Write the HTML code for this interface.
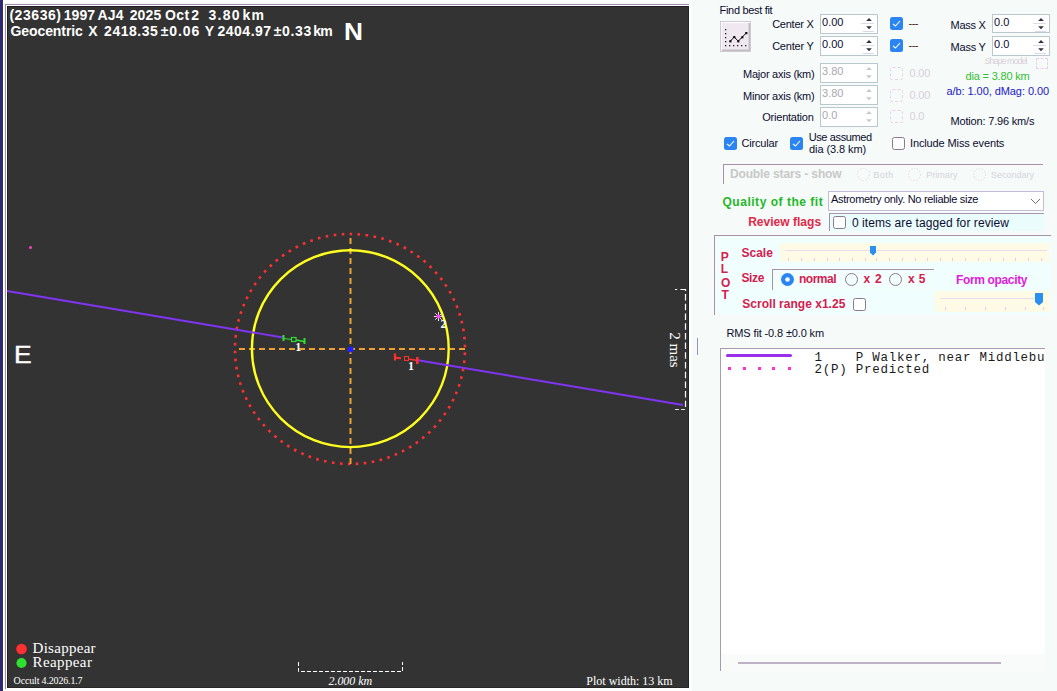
<!DOCTYPE html>
<html><head><meta charset="utf-8"><style>
html,body{margin:0;padding:0;width:1057px;height:691px;overflow:hidden;background:#f6faf8;}
.r{position:absolute;box-sizing:border-box;}
.t{position:absolute;white-space:pre;}
</style></head><body>
<div class="r" style="left:0px;top:0px;width:2px;height:691px;background:#2b2878"></div>
<div class="r" style="left:2px;top:0px;width:1px;height:691px;background:#3a3044"></div>
<div class="r" style="left:3px;top:0px;width:689px;height:691px;background:#fdfefd"></div>
<div class="r" style="left:4px;top:3px;width:686px;height:1px;background:#eef8ee"></div>
<div class="r" style="left:4px;top:3px;width:1px;height:686px;background:#e6fae6"></div>
<div class="r" style="left:5px;top:4px;width:684px;height:1px;background:#a888b4"></div>
<div class="r" style="left:5px;top:4px;width:1px;height:685px;background:#a888b4"></div>
<div class="r" style="left:7px;top:6px;width:682px;height:682px;background:#333333"></div>
<div class="r" style="left:7px;top:6px;width:682px;height:1px;background:#1e1e1e"></div>
<div class="r" style="left:7px;top:6px;width:1px;height:682px;background:#1e1e1e"></div>
<div class="r" style="left:688px;top:6px;width:1px;height:682px;background:#262626"></div>
<div class="r" style="left:7px;top:687px;width:682px;height:1px;background:#262626"></div>
<svg class="r" style="left:0;top:0" width="1057" height="691" viewBox="0 0 1057 691"><circle cx="350" cy="349" r="115" fill="none" stroke="#ff3030" stroke-width="2.6" stroke-dasharray="2.6 5.4" pathLength="720" stroke-dashoffset="4.4"/><line x1="235" y1="349.1" x2="465" y2="349.1" stroke="#f0a030" stroke-width="2" stroke-dasharray="6 4" stroke-dashoffset="6"/><line x1="350.5" y1="235" x2="350.5" y2="465" stroke="#f0a030" stroke-width="2" stroke-dasharray="6 4" stroke-dashoffset="7"/><circle cx="350.3" cy="348.7" r="98.4" fill="none" stroke="#ffff20" stroke-width="2.4"/><line x1="7" y1="291" x2="283" y2="337.5" stroke="#8034f4" stroke-width="1.9"/><line x1="418" y1="360.3" x2="683" y2="405" stroke="#8034f4" stroke-width="1.9"/><circle cx="350.5" cy="349.5" r="3" fill="#2020ff"/></svg>
<svg class="r" style="left:0;top:0" width="1057" height="691" viewBox="0 0 1057 691"><path d="M283.5 335 V341" stroke="#30e030" stroke-width="2"/><path d="M284 338.5 L292 339.5" stroke="#30e030" stroke-width="1"/><rect x="291.5" y="337.5" width="4.5" height="4" fill="none" stroke="#30e030" stroke-width="1.2"/><path d="M296 340 L304 341.5" stroke="#30e030" stroke-width="1.6"/><path d="M304.5 338 V344" stroke="#30e030" stroke-width="2"/><path d="M395 353.5 V360.5" stroke="#ff3030" stroke-width="2.2"/><path d="M396 357.7 L401 358.2" stroke="#ff3030" stroke-width="2"/><rect x="404.5" y="356.5" width="4" height="4" fill="none" stroke="#ff3030" stroke-width="1"/><path d="M408.5 359 L416 360.3" stroke="#ff3030" stroke-width="1.6"/><path d="M417.3 357 V364" stroke="#ff3030" stroke-width="2.6"/><line x1="438.5" y1="316.5" x2="443.10" y2="316.50" stroke="#f0e0f0" stroke-width="1"/><line x1="438.5" y1="316.5" x2="441.75" y2="319.75" stroke="#f0e0f0" stroke-width="1"/><line x1="438.5" y1="316.5" x2="438.50" y2="321.10" stroke="#f0e0f0" stroke-width="1"/><line x1="438.5" y1="316.5" x2="435.25" y2="319.75" stroke="#f0e0f0" stroke-width="1"/><line x1="438.5" y1="316.5" x2="433.90" y2="316.50" stroke="#f0e0f0" stroke-width="1"/><line x1="438.5" y1="316.5" x2="435.25" y2="313.25" stroke="#f0e0f0" stroke-width="1"/><line x1="438.5" y1="316.5" x2="438.50" y2="311.90" stroke="#f0e0f0" stroke-width="1"/><line x1="438.5" y1="316.5" x2="441.75" y2="313.25" stroke="#f0e0f0" stroke-width="1"/><circle cx="438.5" cy="316.5" r="2" fill="#ff40ff"/><circle cx="30.5" cy="247.5" r="1.5" fill="#ff40c0"/><path d="M675 289.5 H685.5 V407" fill="none" stroke="#fff" stroke-width="1.2" stroke-dasharray="6.5 3.2" stroke-dashoffset="4.3"/><path d="M675 409.5 H686" fill="none" stroke="#e0e0e0" stroke-width="1" stroke-dasharray="4 2"/><path d="M298.5 662 V671.5 H402.5 V662" fill="none" stroke="#fff" stroke-width="1" stroke-dasharray="4 2"/><circle cx="21.5" cy="649" r="5.3" fill="#ff3030"/><circle cx="21.5" cy="663" r="5.1" fill="#30e030"/></svg>
<div class="t" style="left:295.34px;top:340.75px;font:normal bold 12px 'Liberation Serif', serif;line-height:12px;color:#fff;letter-spacing:0.000px;">1</div>
<div class="t" style="left:408.04px;top:359.95px;font:normal bold 12px 'Liberation Serif', serif;line-height:12px;color:#fff;letter-spacing:0.000px;">1</div>
<div class="t" style="left:440.50px;top:317.75px;font:normal bold 12px 'Liberation Serif', serif;line-height:12px;color:#fff;letter-spacing:0.000px;">2</div>
<div class="t" style="left:674px;top:350px;width:0;height:0"><div style="position:absolute;left:0;top:0;transform:translate(-50%,-50%) rotate(90deg);font:15px 'Liberation Serif', serif;color:#fff;white-space:pre;line-height:15px">2 mas</div></div>
<div class="t" style="left:32.57px;top:641.44px;font:normal normal 15px 'Liberation Serif', serif;line-height:15px;color:#fff;letter-spacing:0.281px;">Disappear</div>
<div class="t" style="left:32.57px;top:655.14px;font:normal normal 15px 'Liberation Serif', serif;line-height:15px;color:#fff;letter-spacing:0.389px;">Reappear</div>
<div class="t" style="left:13.59px;top:675.83px;font:normal normal 10px 'Liberation Serif', serif;line-height:10px;color:#fff;letter-spacing:-0.166px;">Occult 4.2026.1.7</div>
<div class="t" style="left:328.59px;top:675.45px;font:italic normal 12px 'Liberation Serif', serif;line-height:12px;color:#fff;letter-spacing:-0.070px;">2.000 km</div>
<div class="t" style="left:586.35px;top:675.45px;font:normal normal 12px 'Liberation Serif', serif;line-height:12px;color:#fff;letter-spacing:-0.001px;">Plot width: 13 km</div>
<div class="t" style="left:9.40px;top:8.15px;font:normal bold 14px 'Liberation Sans', sans-serif;line-height:14px;color:#fff;letter-spacing:0.555px;">(23636)</div>
<div class="t" style="left:63.72px;top:8.15px;font:normal bold 14px 'Liberation Sans', sans-serif;line-height:14px;color:#fff;letter-spacing:0.047px;">1997</div>
<div class="t" style="left:97.45px;top:8.15px;font:normal bold 14px 'Liberation Sans', sans-serif;line-height:14px;color:#fff;letter-spacing:0.168px;">AJ4</div>
<div class="t" style="left:129.71px;top:8.15px;font:normal bold 14px 'Liberation Sans', sans-serif;line-height:14px;color:#fff;letter-spacing:0.106px;">2025</div>
<div class="t" style="left:164.93px;top:8.15px;font:normal bold 14px 'Liberation Sans', sans-serif;line-height:14px;color:#fff;letter-spacing:0.501px;">Oct</div>
<div class="t" style="left:191.31px;top:8.15px;font:normal bold 14px 'Liberation Sans', sans-serif;line-height:14px;color:#fff;letter-spacing:0.000px;">2</div>
<div class="t" style="left:208.58px;top:8.15px;font:normal bold 14px 'Liberation Sans', sans-serif;line-height:14px;color:#fff;letter-spacing:1.249px;">3.80</div>
<div class="t" style="left:242.42px;top:8.15px;font:normal bold 14px 'Liberation Sans', sans-serif;line-height:14px;color:#fff;letter-spacing:1.411px;">km</div>
<div class="t" style="left:10.43px;top:23.65px;font:normal bold 14px 'Liberation Sans', sans-serif;line-height:14px;color:#fff;letter-spacing:-0.073px;">Geocentric</div>
<div class="t" style="left:88.28px;top:23.65px;font:normal bold 14px 'Liberation Sans', sans-serif;line-height:14px;color:#fff;letter-spacing:0.000px;">X</div>
<div class="t" style="left:104.11px;top:23.65px;font:normal bold 14px 'Liberation Sans', sans-serif;line-height:14px;color:#fff;letter-spacing:0.511px;">2418.35</div>
<div class="t" style="left:160.77px;top:23.65px;font:normal bold 14px 'Liberation Sans', sans-serif;line-height:14px;color:#fff;letter-spacing:0.888px;">±0.06</div>
<div class="t" style="left:204.66px;top:23.65px;font:normal bold 14px 'Liberation Sans', sans-serif;line-height:14px;color:#fff;letter-spacing:0.000px;">Y</div>
<div class="t" style="left:217.51px;top:23.65px;font:normal bold 14px 'Liberation Sans', sans-serif;line-height:14px;color:#fff;letter-spacing:0.499px;">2404.97</div>
<div class="t" style="left:273.67px;top:23.65px;font:normal bold 14px 'Liberation Sans', sans-serif;line-height:14px;color:#fff;letter-spacing:0.663px;">±0.33</div>
<div class="t" style="left:313.27px;top:23.65px;font:normal bold 14px 'Liberation Sans', sans-serif;line-height:14px;color:#fff;letter-spacing:-0.889px;">km</div>
<div class="t" style="left:343.76px;top:20.53px;font:normal bold 23px 'Liberation Sans', sans-serif;line-height:23px;color:#fff;letter-spacing:0.000px;transform:scaleX(1.14);transform-origin:0 0">N</div>
<div class="t" style="left:14.31px;top:343.53px;font:normal normal 23px 'Liberation Sans', sans-serif;line-height:23px;color:#fff;letter-spacing:0.000px;transform:scaleX(1.15);transform-origin:0 0;-webkit-text-stroke:0.4px #fff">E</div>
<div class="t" style="left:719.60px;top:4.69px;font:normal normal 11px 'Liberation Sans', sans-serif;line-height:11px;color:#0c0c30;letter-spacing:-0.323px;">Find best fit</div>
<div class="t" style="left:772.14px;top:19.09px;font:normal normal 11px 'Liberation Sans', sans-serif;line-height:11px;color:#0c0c30;letter-spacing:-0.233px;">Center X</div>
<div class="t" style="left:772.14px;top:41.29px;font:normal normal 11px 'Liberation Sans', sans-serif;line-height:11px;color:#0c0c30;letter-spacing:-0.203px;">Center Y</div>
<div class="t" style="left:743.10px;top:68.69px;font:normal normal 11px 'Liberation Sans', sans-serif;line-height:11px;color:#0c0c30;letter-spacing:-0.256px;">Major axis (km)</div>
<div class="t" style="left:743.10px;top:90.69px;font:normal normal 11px 'Liberation Sans', sans-serif;line-height:11px;color:#0c0c30;letter-spacing:-0.256px;">Minor axis (km)</div>
<div class="t" style="left:762.28px;top:111.69px;font:normal normal 11px 'Liberation Sans', sans-serif;line-height:11px;color:#0c0c30;letter-spacing:-0.228px;">Orientation</div>
<div class="t" style="left:950.60px;top:19.69px;font:normal normal 11px 'Liberation Sans', sans-serif;line-height:11px;color:#0c0c30;letter-spacing:-0.271px;">Mass X</div>
<div class="t" style="left:950.60px;top:41.69px;font:normal normal 11px 'Liberation Sans', sans-serif;line-height:11px;color:#0c0c30;letter-spacing:-0.228px;">Mass Y</div>
<div class="r" style="left:720px;top:21px;width:31px;height:31px;background:#f0e8f0;border:1px solid #d0c8d4;box-shadow:inset 1px 1px 0 #fff, inset -1px -1px 0 #c0bcc0, inset -2px -2px 0 #d8d4d8"></div>
<svg class="r" style="left:720px;top:21px" width="31" height="31" viewBox="720 21 31 31"><rect x="725" y="29" width="1.3" height="1.3" fill="#222"/><rect x="725" y="33" width="1.3" height="1.3" fill="#222"/><rect x="725" y="37" width="1.3" height="1.3" fill="#222"/><rect x="725" y="41" width="1.3" height="1.3" fill="#222"/><rect x="725" y="45" width="1.3" height="1.3" fill="#222"/><rect x="729" y="45" width="1.3" height="1.3" fill="#222"/><rect x="733" y="45" width="1.3" height="1.3" fill="#222"/><rect x="737" y="45" width="1.3" height="1.3" fill="#222"/><rect x="741" y="45" width="1.3" height="1.3" fill="#222"/><rect x="745" y="45" width="1.3" height="1.3" fill="#222"/><path d="M730.3 41.2 L734.2 37 L738.2 41.2 L742.2 37.2 L746.2 33" fill="none" stroke="#111" stroke-width="1"/><rect x="729.3" y="40.2" width="2.2" height="2.2" fill="#111"/><rect x="733.2" y="36" width="2.2" height="2.2" fill="#111"/><rect x="737.2" y="40.2" width="2.2" height="2.2" fill="#111"/><rect x="741.2" y="36.2" width="2.2" height="2.2" fill="#111"/><rect x="745.2" y="32" width="2.2" height="2.2" fill="#111"/></svg>
<div class="r" style="left:820px;top:14px;width:58px;height:20px;background:#fff;border:1px solid #b8c8cc"></div>
<div class="t" style="left:822.07px;top:17.29px;font:normal normal 11px 'Liberation Sans', sans-serif;line-height:11px;color:#0c0c30;letter-spacing:0.000px;">0.00</div>
<svg class="r" style="left:863.5px;top:17px" width="10" height="14" viewBox="0 0 10 14"><path d="M2.2 4 L5 1 L7.8 4 Z" fill="#303040"/><path d="M2.2 9.3 L5 12.3 L7.8 9.3 Z" fill="#303040"/></svg>
<div class="r" style="left:860.5px;top:23px;width:13px;height:1px;background:#e0d8ec"></div>
<div class="r" style="left:862.5px;top:31px;width:11px;height:1px;background:#d8d8ec"></div>
<div class="r" style="left:820px;top:36px;width:58px;height:20px;background:#fff;border:1px solid #b8c8cc"></div>
<div class="t" style="left:822.07px;top:39.29px;font:normal normal 11px 'Liberation Sans', sans-serif;line-height:11px;color:#0c0c30;letter-spacing:0.000px;">0.00</div>
<svg class="r" style="left:863.5px;top:39px" width="10" height="14" viewBox="0 0 10 14"><path d="M2.2 4 L5 1 L7.8 4 Z" fill="#303040"/><path d="M2.2 9.3 L5 12.3 L7.8 9.3 Z" fill="#303040"/></svg>
<div class="r" style="left:860.5px;top:45px;width:13px;height:1px;background:#e0d8ec"></div>
<div class="r" style="left:862.5px;top:53px;width:11px;height:1px;background:#d8d8ec"></div>
<div class="r" style="left:820px;top:63px;width:58px;height:20px;background:#fff;border:1px solid #b8c8cc"></div>
<div class="t" style="left:822.08px;top:66.29px;font:normal normal 11px 'Liberation Sans', sans-serif;line-height:11px;color:#a8a8b0;letter-spacing:0.000px;">3.80</div>
<svg class="r" style="left:863.5px;top:66px" width="10" height="14" viewBox="0 0 10 14"><path d="M2.2 4 L5 1 L7.8 4 Z" fill="#c8c8cc"/><path d="M2.2 9.3 L5 12.3 L7.8 9.3 Z" fill="#c8c8cc"/></svg>
<div class="r" style="left:820px;top:85px;width:58px;height:20px;background:#fff;border:1px solid #b8c8cc"></div>
<div class="t" style="left:822.08px;top:88.29px;font:normal normal 11px 'Liberation Sans', sans-serif;line-height:11px;color:#a8a8b0;letter-spacing:0.000px;">3.80</div>
<svg class="r" style="left:863.5px;top:88px" width="10" height="14" viewBox="0 0 10 14"><path d="M2.2 4 L5 1 L7.8 4 Z" fill="#c8c8cc"/><path d="M2.2 9.3 L5 12.3 L7.8 9.3 Z" fill="#c8c8cc"/></svg>
<div class="r" style="left:820px;top:107px;width:58px;height:20px;background:#fff;border:1px solid #b8c8cc"></div>
<div class="t" style="left:822.07px;top:110.29px;font:normal normal 11px 'Liberation Sans', sans-serif;line-height:11px;color:#a8a8b0;letter-spacing:0.000px;">0.0</div>
<svg class="r" style="left:863.5px;top:110px" width="10" height="14" viewBox="0 0 10 14"><path d="M2.2 4 L5 1 L7.8 4 Z" fill="#c8c8cc"/><path d="M2.2 9.3 L5 12.3 L7.8 9.3 Z" fill="#c8c8cc"/></svg>
<div class="r" style="left:992px;top:14px;width:58px;height:19px;background:#fff;border:1px solid #b8c8cc"></div>
<div class="t" style="left:994.07px;top:17.29px;font:normal normal 11px 'Liberation Sans', sans-serif;line-height:11px;color:#0c0c30;letter-spacing:0.000px;">0.0</div>
<svg class="r" style="left:1035.5px;top:17px" width="10" height="14" viewBox="0 0 10 14"><path d="M2.2 4 L5 1 L7.8 4 Z" fill="#303040"/><path d="M2.2 9.3 L5 12.3 L7.8 9.3 Z" fill="#303040"/></svg>
<div class="r" style="left:1032.5px;top:23px;width:13px;height:1px;background:#e0d8ec"></div>
<div class="r" style="left:1034.5px;top:31px;width:11px;height:1px;background:#d8d8ec"></div>
<div class="r" style="left:992px;top:36px;width:58px;height:20px;background:#fff;border:1px solid #b8c8cc"></div>
<div class="t" style="left:994.07px;top:39.29px;font:normal normal 11px 'Liberation Sans', sans-serif;line-height:11px;color:#0c0c30;letter-spacing:0.000px;">0.0</div>
<svg class="r" style="left:1035.5px;top:39px" width="10" height="14" viewBox="0 0 10 14"><path d="M2.2 4 L5 1 L7.8 4 Z" fill="#303040"/><path d="M2.2 9.3 L5 12.3 L7.8 9.3 Z" fill="#303040"/></svg>
<div class="r" style="left:1032.5px;top:45px;width:13px;height:1px;background:#e0d8ec"></div>
<div class="r" style="left:1034.5px;top:53px;width:11px;height:1px;background:#d8d8ec"></div>
<svg class="r" style="left:890px;top:17px" width="13" height="13" viewBox="0 0 13 13"><rect x="0" y="0" width="13" height="13" rx="2.5" fill="#2a84f2"/><path d="M3 6.8 L5.4 9 L10 4" fill="none" stroke="#fff" stroke-width="1.1"/></svg>
<svg class="r" style="left:890px;top:39px" width="13" height="13" viewBox="0 0 13 13"><rect x="0" y="0" width="13" height="13" rx="2.5" fill="#2a84f2"/><path d="M3 6.8 L5.4 9 L10 4" fill="none" stroke="#fff" stroke-width="1.1"/></svg>
<div class="t" style="left:908.51px;top:18.19px;font:normal normal 11px 'Liberation Sans', sans-serif;line-height:11px;color:#402010;letter-spacing:-0.511px;">---</div>
<div class="t" style="left:908.51px;top:40.19px;font:normal normal 11px 'Liberation Sans', sans-serif;line-height:11px;color:#402010;letter-spacing:-0.511px;">---</div>
<div class="r" style="left:890px;top:67px;width:13px;height:13px;border:1px dashed #e6d2e6;border-radius:2.5px;background:transparent"></div>
<div class="r" style="left:890px;top:89px;width:13px;height:13px;border:1px dashed #e6d2e6;border-radius:2.5px;background:transparent"></div>
<div class="r" style="left:890px;top:110px;width:13px;height:13px;border:1px dashed #e6d2e6;border-radius:2.5px;background:transparent"></div>
<div class="t" style="left:909.57px;top:67.69px;font:normal normal 11px 'Liberation Sans', sans-serif;line-height:11px;color:#d8d0d8;letter-spacing:-0.188px;">0.00</div>
<div class="t" style="left:909.57px;top:89.69px;font:normal normal 11px 'Liberation Sans', sans-serif;line-height:11px;color:#d8d0d8;letter-spacing:-0.188px;">0.00</div>
<div class="t" style="left:909.57px;top:111.19px;font:normal normal 11px 'Liberation Sans', sans-serif;line-height:11px;color:#d8d0d8;letter-spacing:-0.219px;">0.0</div>
<div class="t" style="left:984.59px;top:56.88px;font:normal normal 9px 'Liberation Sans', sans-serif;line-height:9px;color:#d8d0d8;letter-spacing:-1.004px;">Shape model</div>
<div class="r" style="left:1035.5px;top:57.5px;width:12.5px;height:11px;border:1px dashed #e6d2e6;border-radius:1px"></div>
<div class="t" style="left:965.54px;top:70.69px;font:normal normal 11px 'Liberation Sans', sans-serif;line-height:11px;color:#30c030;letter-spacing:-0.180px;">dia = 3.80 km</div>
<div class="t" style="left:946.53px;top:85.69px;font:normal normal 11px 'Liberation Sans', sans-serif;line-height:11px;color:#2020c8;letter-spacing:-0.069px;">a/b: 1.00, dMag: 0.00</div>
<div class="t" style="left:950.60px;top:115.69px;font:normal normal 11px 'Liberation Sans', sans-serif;line-height:11px;color:#0c0c30;letter-spacing:-0.189px;">Motion: 7.96 km/s</div>
<svg class="r" style="left:724px;top:137px" width="13" height="13" viewBox="0 0 13 13"><rect x="0" y="0" width="13" height="13" rx="2.5" fill="#2a84f2"/><path d="M3 6.8 L5.4 9 L10 4" fill="none" stroke="#fff" stroke-width="1.1"/></svg>
<div class="t" style="left:741.44px;top:138.19px;font:normal normal 11px 'Liberation Sans', sans-serif;line-height:11px;color:#0c0c30;letter-spacing:-0.166px;">Circular</div>
<svg class="r" style="left:790px;top:137px" width="13" height="13" viewBox="0 0 13 13"><rect x="0" y="0" width="13" height="13" rx="2.5" fill="#2a84f2"/><path d="M3 6.8 L5.4 9 L10 4" fill="none" stroke="#fff" stroke-width="1.1"/></svg>
<div class="t" style="left:808.65px;top:131.69px;font:normal normal 11px 'Liberation Sans', sans-serif;line-height:11px;color:#0c0c30;letter-spacing:-0.371px;">Use assumed</div>
<div class="t" style="left:809.04px;top:144.09px;font:normal normal 11px 'Liberation Sans', sans-serif;line-height:11px;color:#0c0c30;letter-spacing:-0.085px;">dia (3.8 km)</div>
<div class="r" style="left:892px;top:137px;width:13px;height:13px;border:1px solid #8a7890;border-radius:2.5px;background:#fff"></div>
<div class="t" style="left:909.98px;top:138.39px;font:normal normal 11px 'Liberation Sans', sans-serif;line-height:11px;color:#0c0c30;letter-spacing:-0.122px;">Include Miss events</div>
<div class="r" style="left:723px;top:164px;width:320px;height:1px;background:#a890a8"></div>
<div class="r" style="left:723px;top:164px;width:1px;height:20px;background:#a890a8"></div>
<div class="t" style="left:729.90px;top:167.84px;font:normal bold 12px 'Liberation Sans', sans-serif;line-height:12px;color:#c8c8c8;letter-spacing:-0.125px;">Double stars - show</div>
<svg class="r" style="left:857px;top:168px" width="13" height="13" viewBox="0 0 13 13"><circle cx="6.5" cy="6.5" r="6" fill="none" stroke="#ead8ea" stroke-width="1" stroke-dasharray="1.5 1.5"/></svg>
<div class="t" style="left:873.26px;top:171.38px;font:normal normal 9px 'Liberation Sans', sans-serif;line-height:9px;color:#d4d4d8;letter-spacing:0.469px;">Both</div>
<svg class="r" style="left:908px;top:168px" width="13" height="13" viewBox="0 0 13 13"><circle cx="6.5" cy="6.5" r="6" fill="none" stroke="#ead8ea" stroke-width="1" stroke-dasharray="1.5 1.5"/></svg>
<div class="t" style="left:926.26px;top:171.38px;font:normal normal 9px 'Liberation Sans', sans-serif;line-height:9px;color:#d4d4d8;letter-spacing:0.026px;">Primary</div>
<svg class="r" style="left:973px;top:168px" width="13" height="13" viewBox="0 0 13 13"><circle cx="6.5" cy="6.5" r="6" fill="none" stroke="#ead8ea" stroke-width="1" stroke-dasharray="1.5 1.5"/></svg>
<div class="t" style="left:990.99px;top:171.38px;font:normal normal 9px 'Liberation Sans', sans-serif;line-height:9px;color:#d4d4d8;letter-spacing:-0.001px;">Secondary</div>
<div class="t" style="left:722.51px;top:196.14px;font:normal bold 12px 'Liberation Sans', sans-serif;line-height:12px;color:#22b82a;letter-spacing:0.523px;">Quality of the fit</div>
<div class="r" style="left:828px;top:191px;width:216px;height:20px;background:#fff;border:1px solid #c4bcd8"></div>
<div class="t" style="left:830.98px;top:194.49px;font:normal normal 11px 'Liberation Sans', sans-serif;line-height:11px;color:#0c0c30;letter-spacing:-0.294px;">Astrometry only. No reliable size</div>
<svg class="r" style="left:1030px;top:196px" width="12" height="10"><path d="M1 3 L5.5 7.5 L10 3" fill="none" stroke="#707070" stroke-width="1"/></svg>
<div class="t" style="left:748.20px;top:216.04px;font:normal bold 12px 'Liberation Sans', sans-serif;line-height:12px;color:#e02848;letter-spacing:0.017px;">Review flags</div>
<div class="r" style="left:829px;top:213px;width:215px;height:18px;background:#eafcfc;border-left:1px solid #a090a8;border-top:1px solid #a898b0"></div>
<div class="r" style="left:833px;top:215.5px;width:13px;height:13px;border:1px solid #8a7890;border-radius:2.5px;background:#fff"></div>
<div class="t" style="left:851.93px;top:217.04px;font:normal normal 12px 'Liberation Sans', sans-serif;line-height:12px;color:#0c0c30;letter-spacing:0.082px;">0 items are tagged for review</div>
<div class="r" style="left:714px;top:235px;width:337px;height:80px;background:#f0fefd"></div>
<div class="r" style="left:714px;top:235px;width:337px;height:1px;background:#a890a8"></div>
<div class="r" style="left:714px;top:235px;width:1px;height:80px;background:#a890a8"></div>
<div class="t" style="left:720.80px;top:250.84px;font:normal bold 12px 'Liberation Sans', sans-serif;line-height:12px;color:#d42050;letter-spacing:0.000px;">P</div>
<div class="t" style="left:720.80px;top:262.84px;font:normal bold 12px 'Liberation Sans', sans-serif;line-height:12px;color:#d42050;letter-spacing:0.000px;">L</div>
<div class="t" style="left:721.11px;top:276.84px;font:normal bold 12px 'Liberation Sans', sans-serif;line-height:12px;color:#d42050;letter-spacing:0.000px;">O</div>
<div class="t" style="left:721.47px;top:289.34px;font:normal bold 12px 'Liberation Sans', sans-serif;line-height:12px;color:#d42050;letter-spacing:0.000px;">T</div>
<div class="t" style="left:741.40px;top:246.64px;font:normal bold 12px 'Liberation Sans', sans-serif;line-height:12px;color:#d42050;letter-spacing:0.037px;">Scale</div>
<div class="r" style="left:780px;top:243px;width:269px;height:19px;background:#fdfbe6"></div>
<div class="r" style="left:785px;top:250px;width:262px;height:1px;background:#eadcec"></div>
<div class="r" style="left:788px;top:258px;width:1px;height:3px;background:#f0c8ea"></div>
<div class="r" style="left:801px;top:258px;width:1px;height:3px;background:#f0c8ea"></div>
<div class="r" style="left:814px;top:258px;width:1px;height:3px;background:#f0c8ea"></div>
<div class="r" style="left:827px;top:258px;width:1px;height:3px;background:#f0c8ea"></div>
<div class="r" style="left:839px;top:258px;width:1px;height:3px;background:#f0c8ea"></div>
<div class="r" style="left:852px;top:258px;width:1px;height:3px;background:#f0c8ea"></div>
<div class="r" style="left:865px;top:258px;width:1px;height:3px;background:#f0c8ea"></div>
<div class="r" style="left:876px;top:258px;width:1px;height:3px;background:#f0c8ea"></div>
<div class="r" style="left:889px;top:258px;width:1px;height:3px;background:#f0c8ea"></div>
<div class="r" style="left:902px;top:258px;width:1px;height:3px;background:#f0c8ea"></div>
<div class="r" style="left:915px;top:258px;width:1px;height:3px;background:#f0c8ea"></div>
<div class="r" style="left:927px;top:258px;width:1px;height:3px;background:#f0c8ea"></div>
<div class="r" style="left:940px;top:258px;width:1px;height:3px;background:#f0c8ea"></div>
<div class="r" style="left:952px;top:258px;width:1px;height:3px;background:#f0c8ea"></div>
<div class="r" style="left:965px;top:258px;width:1px;height:3px;background:#f0c8ea"></div>
<div class="r" style="left:978px;top:258px;width:1px;height:3px;background:#f0c8ea"></div>
<div class="r" style="left:990px;top:258px;width:1px;height:3px;background:#f0c8ea"></div>
<div class="r" style="left:1003px;top:258px;width:1px;height:3px;background:#f0c8ea"></div>
<div class="r" style="left:1015px;top:258px;width:1px;height:3px;background:#f0c8ea"></div>
<div class="r" style="left:1028px;top:258px;width:1px;height:3px;background:#f0c8ea"></div>
<div class="r" style="left:1041px;top:258px;width:1px;height:3px;background:#f0c8ea"></div>
<svg class="r" style="left:870px;top:246px" width="7" height="10"><path d="M0 0 H6 V6.5 L3 9.5 L0 6.5 Z" fill="#2a90f0"/></svg>
<div class="t" style="left:741.40px;top:272.44px;font:normal bold 12px 'Liberation Sans', sans-serif;line-height:12px;color:#d42050;letter-spacing:-0.320px;">Size</div>
<div class="r" style="left:772px;top:269px;width:162px;height:21px;background:#f2fefb"></div>
<div class="r" style="left:772px;top:269px;width:162px;height:1px;background:#a890a8"></div>
<div class="r" style="left:772px;top:269px;width:1px;height:21px;background:#a890a8"></div>
<svg class="r" style="left:781px;top:273px" width="13" height="13" viewBox="0 0 13 13"><circle cx="6.5" cy="6.5" r="6.5" fill="#2a84f2"/><circle cx="6.5" cy="6.5" r="2.3" fill="#fff"/></svg>
<div class="t" style="left:798.91px;top:273.34px;font:normal bold 12px 'Liberation Sans', sans-serif;line-height:12px;color:#d42050;letter-spacing:-0.455px;">normal</div>
<svg class="r" style="left:845px;top:273px" width="13" height="13" viewBox="0 0 13 13"><circle cx="6.5" cy="6.5" r="6" fill="none" stroke="#8a7890" stroke-width="1" /></svg>
<div class="t" style="left:863.62px;top:273.34px;font:normal bold 12px 'Liberation Sans', sans-serif;line-height:12px;color:#d42050;letter-spacing:0.738px;">x 2</div>
<svg class="r" style="left:889px;top:273px" width="13" height="13" viewBox="0 0 13 13"><circle cx="6.5" cy="6.5" r="6" fill="none" stroke="#8a7890" stroke-width="1" /></svg>
<div class="t" style="left:907.92px;top:273.34px;font:normal bold 12px 'Liberation Sans', sans-serif;line-height:12px;color:#d42050;letter-spacing:0.364px;">x 5</div>
<div class="t" style="left:955.90px;top:273.84px;font:normal bold 12px 'Liberation Sans', sans-serif;line-height:12px;color:#e020d8;letter-spacing:-0.336px;">Form opacity</div>
<div class="r" style="left:935px;top:291px;width:115px;height:21px;background:#fdfbe6"></div>
<div class="r" style="left:940px;top:298px;width:100px;height:1px;background:#eadcec"></div>
<div class="r" style="left:945px;top:307px;width:1px;height:3px;background:#f0c8ea"></div>
<div class="r" style="left:965px;top:307px;width:1px;height:3px;background:#f0c8ea"></div>
<div class="r" style="left:985px;top:307px;width:1px;height:3px;background:#f0c8ea"></div>
<div class="r" style="left:1005px;top:307px;width:1px;height:3px;background:#f0c8ea"></div>
<div class="r" style="left:1025px;top:307px;width:1px;height:3px;background:#f0c8ea"></div>
<div class="r" style="left:1043px;top:307px;width:1px;height:3px;background:#f0c8ea"></div>
<svg class="r" style="left:1035px;top:293px" width="8" height="13"><path d="M0 0 H8 V9 L4 12.5 L0 9 Z" fill="#2a90f0"/></svg>
<div class="t" style="left:742.35px;top:298.44px;font:normal bold 12px 'Liberation Sans', sans-serif;line-height:12px;color:#d42050;letter-spacing:0.014px;">Scroll range x1.25</div>
<div class="r" style="left:853px;top:298px;width:13px;height:13px;border:1px solid #8a7890;border-radius:2.5px;background:#fff"></div>
<div class="t" style="left:726.50px;top:328.49px;font:normal normal 11px 'Liberation Sans', sans-serif;line-height:11px;color:#0c0c30;letter-spacing:-0.134px;">RMS fit -0.8 ±0.0 km</div>
<div class="r" style="left:720px;top:348px;width:325px;height:323px;background:#fff"></div>
<div class="r" style="left:720px;top:654px;width:325px;height:17px;background:#f8fbf9"></div>
<div class="r" style="left:720px;top:348px;width:325px;height:1px;background:#a898b0"></div>
<div class="r" style="left:720px;top:348px;width:1px;height:323px;background:#a898b0"></div>
<div class="r" style="left:738px;top:662px;width:263px;height:2px;background:#bcb2c4"></div>
<div class="r" style="left:697px;top:338px;width:1px;height:17px;background:#9a90b0"></div>
<div class="r" style="left:726px;top:354px;width:66px;height:3px;background:#9a30ec;border-radius:1.5px"></div>
<div class="r" style="left:728px;top:367px;width:3px;height:3px;background:#ff30d0"></div>
<div class="r" style="left:743px;top:367px;width:3px;height:3px;background:#ff30d0"></div>
<div class="r" style="left:758px;top:367px;width:3px;height:3px;background:#ff30d0"></div>
<div class="r" style="left:772px;top:367px;width:3px;height:3px;background:#ff30d0"></div>
<div class="r" style="left:788px;top:367px;width:3px;height:3px;background:#ff30d0"></div>
<div class="t" style="left:814.60px;top:352.42px;font:normal normal 12.5px 'Liberation Mono', monospace;line-height:12.5px;color:#1a1a1a;letter-spacing:0.740px;">1    P Walker, near Middlebu</div>
<div class="t" style="left:814.62px;top:363.92px;font:normal normal 12.5px 'Liberation Mono', monospace;line-height:12.5px;color:#1a1a1a;letter-spacing:0.740px;">2(P) Predicted</div>
<div class="r" style="left:1045px;top:348px;width:12px;height:330px;background:#f6faf8"></div>
</body></html>
